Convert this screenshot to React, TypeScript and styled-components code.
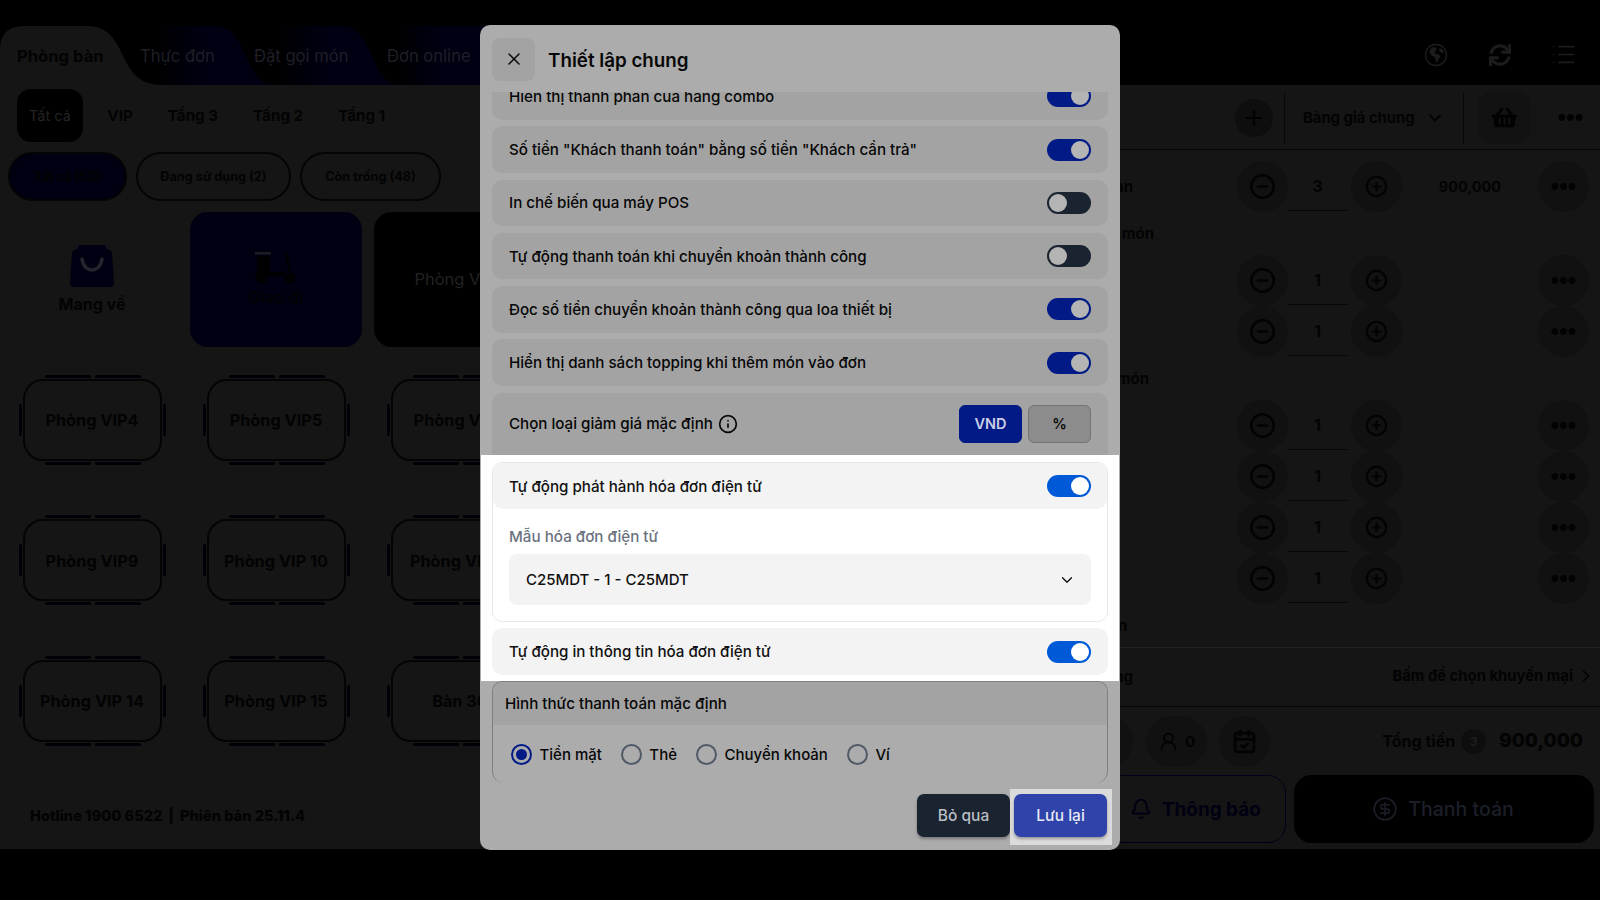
import React from "react";
import styled, { createGlobalStyle } from "styled-components";
import { X, ChevronDown, ChevronRight, Info, Plus, List, CircleMinus, CirclePlus, UserRound, CalendarCheck, Bell, CircleDollarSign } from "lucide-react";
import { FaSync, FaShoppingBasket, FaEllipsisH } from "react-icons/fa";

const Global = createGlobalStyle`
  html, body { margin: 0; padding: 0; background: #000; }
  * { box-sizing: border-box; }
  body { font-family: Inter, "Noto Sans", "Liberation Sans", sans-serif; }
`;

const Page = styled.div`
  position: relative; width: 1600px; height: 900px; background: #000; overflow: hidden;
  display: flex; flex-direction: column; color: #030303;
`;
const TopBar = styled.div`display: flex; height: 85px; padding-top: 26px; flex-shrink: 0;`;
const Tabs = styled.div`display: flex; flex: 1; align-items: stretch;`;
const TabItem = styled.div<{ $w: number; $ml: number; $pl: number; $z: number; $clip: string; $active?: boolean }>`
  position: relative; z-index: ${p => p.$z};
  width: ${p => p.$w}px; margin-left: ${p => p.$ml}px; padding-left: ${p => p.$pl}px;
  display: flex; align-items: center; font-size: 16.6px; white-space: nowrap;
  font-weight: ${p => (p.$active ? 700 : 400)};
  color: ${p => (p.$active ? "#030303" : "#1f1f27")};
  background: ${p => (p.$active ? "#151515" : "linear-gradient(90deg, #000 22%, #000012 55%)")};
  clip-path: path("${p => p.$clip}");
`;
const TopIcons = styled.div`display: flex; padding-right: 5px; align-items: center; padding-bottom: 2px;`;
const TopIcon = styled.div`width: 63.5px; display: flex; justify-content: center; align-items: center; color: #1c1c1c;`;

const Body = styled.div`display: flex; height: 764px; background: #151515;`;
const LeftPanel = styled.div`width: 1040px; display: flex; flex-direction: column; padding-top: 4px;`;
const SubTabs = styled.div`display: flex; padding-left: 17px; height: 53px;`;
const SubTab = styled.div<{ $active?: boolean }>`
  display: flex; align-items: center; padding: 0 ${p => (p.$active ? 12 : 17.5)}px; border-radius: 14px;
  margin-right: ${p => (p.$active ? 7 : 0)}px;
  font-size: ${p => (p.$active ? 14.5 : 15.2)}px; font-weight: ${p => (p.$active ? 400 : 700)};
  background: ${p => (p.$active ? "#000" : "transparent")};
  color: ${p => (p.$active ? "#232323" : "#030303")};
`;
const Filters = styled.div`display: flex; gap: 9px; padding-left: 8px; margin-top: 9.5px;`;
const Filter = styled.div<{ $active?: boolean; $w: number }>`
  width: ${p => p.$w}px; height: 49px; border-radius: 25px; display: flex; align-items: center; justify-content: center;
  font-size: 12.7px; font-weight: 700; border: 2px solid #040404;
  background: ${p => (p.$active ? "#000012" : "transparent")};
  color: #030303;
`;
const Specials = styled.div`display: grid; grid-template-columns: repeat(3, 184px); margin-top: 11px; height: 135px;`;
const Special = styled.div<{ $tone: "plain" | "navy" | "black" }>`
  margin: 0 6px; border-radius: 18px; display: flex; flex-direction: column; align-items: center; justify-content: center;
  background: ${p => (p.$tone === "navy" ? "#000012" : p.$tone === "black" ? "#000" : "transparent")};
`;
const SpecialName = styled.div<{ $big?: boolean; $dim?: boolean }>`
  font-size: ${p => (p.$big ? 16 : 16.5)}px; font-weight: ${p => (p.$big ? 700 : p.$dim ? 400 : 500)}; margin-top: ${p => (p.$big ? 7 : p.$dim ? 0 : 3)}px;
  color: ${p => (p.$dim ? "#222" : "#030303")}; white-space: nowrap;
`;
const Rooms = styled.div`display: grid; grid-template-columns: repeat(3, 184px); grid-auto-rows: 140.5px; margin-top: 3px;`;
const RoomCell = styled.div`display: flex; align-items: center; justify-content: center;`;
const Room = styled.div`
  position: relative; width: 139px; height: 82px; border: 2px solid #040404; border-radius: 20px;
  display: flex; align-items: center; justify-content: center; font-size: 16.3px; font-weight: 700; white-space: nowrap; padding-top: 1px;
`;
const ChairH = styled.i<{ $x: number; $bottom?: boolean }>`
  position: absolute; left: ${p => p.$x}px; width: 46px; height: 3px; background: #000009; border-radius: 2px;
  ${p => (p.$bottom ? "bottom: -6px;" : "top: -6px;")}
`;
const ChairV = styled.i<{ $right?: boolean }>`
  position: absolute; top: 23px; width: 3px; height: 32px; background: #000009; border-radius: 2px;
  ${p => (p.$right ? "right: -6px;" : "left: -6px;")}
`;
const Hotline = styled.div`
  margin-top: auto; margin-bottom: 24px; padding-left: 30px; font-size: 14.6px; font-weight: 800; display: flex; gap: 6px; white-space: nowrap;
`;

const RightPanel = styled.div`width: 560px; display: flex; flex-direction: column;`;
const Toolbar = styled.div`
  height: 65px; display: flex; align-items: center; padding: 1px 0 0 195px; border-bottom: 1px solid #050505; flex-shrink: 0;
`;
const AddCircle = styled.div`width: 38px; height: 38px; border-radius: 50%; background: #0e0e0e; display: flex; align-items: center; justify-content: center; color: #020202;`;
const VLine = styled.div<{ $ml: number }>`width: 1px; height: 52px; background: #080808; margin-left: ${p => p.$ml}px;`;
const PriceSelect = styled.div`display: flex; align-items: center; margin-left: 18px; font-size: 14.8px; font-weight: 700; white-space: nowrap; width: 160px; gap: 10px;`;
const BasketBtn = styled.div`width: 53px; height: 53px; border-radius: 15px; background: #121212; margin-left: 14px; display: flex; align-items: center; justify-content: center; color: #020202;`;
const ToolDots = styled.div`margin-left: 27px; display: flex; color: #020202;`;
const Lines = styled.div`padding-top: 11px; display: flex; flex-direction: column;`;
const Line = styled.div<{ $h?: number }>`
  display: grid; grid-template-columns: 197px 51px 59px 55px 136px 51px; height: ${p => p.$h ?? 51}px; align-items: center; padding-right: 11px;
`;
const LineName = styled.div<{ $w: number }>`width: ${p => p.$w}px; text-align: right; white-space: nowrap; font-size: 15px; font-weight: 700;`;
const Group = styled.div<{ $w: number; $h: number }>`
  height: ${p => p.$h}px; width: ${p => p.$w}px; display: flex; align-items: center; justify-content: flex-end; white-space: nowrap; font-size: 15px; font-weight: 700;
`;
const RoundBtn = styled.div`width: 51px; height: 51px; border-radius: 50%; background: #111; display: flex; align-items: center; justify-content: center; color: #030303;`;
const PlusBtn = styled(RoundBtn)`margin-left: 4px;`;
const Qty = styled.div`height: 50px; border-bottom: 1px solid #050505; margin-top: -1px; display: flex; align-items: center; justify-content: center; font-size: 15.5px; font-weight: 700; padding-top: 1px;`;
const Price = styled.div`text-align: center; font-size: 14.5px; font-weight: 700;`;
const NoteRow = styled.div`height: 44px; display: flex; align-items: center; border-bottom: 1px solid #222; font-size: 15px; font-weight: 700;`;
const PromoRow = styled.div`
  height: 59px; display: flex; align-items: center; justify-content: space-between; border-bottom: 1px solid #050505; padding: 0 4px 2px 0; flex-shrink: 0;
`;
const PromoHint = styled.div`display: flex; align-items: center; gap: 3px; white-space: nowrap; font-size: 14.85px; font-weight: 700;`;
const SummaryRow = styled.div`height: 68px; display: flex; align-items: center; padding: 0 17px 0 42px; flex-shrink: 0;`;
const Guests = styled.div`width: 61px; height: 51px; border-radius: 26px; background: #111; margin: 0 12px 0 13px; display: flex; align-items: center; justify-content: center; gap: 6px; font-size: 15px; font-weight: 700; color: #030303;`;
const Total = styled.div`margin-left: auto; display: flex; align-items: center; font-weight: 700; font-size: 16px;`;
const CountBadge = styled.div`width: 25px; height: 25px; border-radius: 50%; background: #0e0e0e; margin: 0 13px 0 6px; display: flex; align-items: center; justify-content: center; font-size: 12px; font-weight: 500; color: #222;`;
const Amount = styled.div`font-size: 19px; font-weight: 800; margin-top: -1px;`;
const Actions = styled.div`display: flex; gap: 8px; padding: 0 6px 0 64px;`;
const NotifyBtn = styled.div`
  width: 182px; height: 68px; border: 1px solid #00001a; border-radius: 18px; color: #000012; display: flex; align-items: center; gap: 10px;
  padding-left: 25px; font-size: 18.9px; font-weight: 700; white-space: nowrap;
`;
const PayBtn = styled.div`
  flex: 1; height: 68px; border-radius: 18px; background: #000; color: #1c1f28; display: flex; align-items: center; justify-content: center; gap: 10px;
  font-size: 19.5px; font-weight: 500; white-space: nowrap; padding-right: 2px;
`;

const Modal = styled.div`
  position: absolute; z-index: 10; left: 480px; top: 25px; width: 640px; height: 825px; border-radius: 10px; background: #acacac;
  display: flex; flex-direction: column; overflow: hidden; color: #070707;
`;
const ModalHead = styled.div`height: 67px; display: flex; align-items: center; padding: 0 12px; gap: 13px; flex-shrink: 0; padding-top: 1px;`;
const CloseBtn = styled.div`width: 43px; height: 43px; border-radius: 8px; background: #a3a3a3; display: flex; align-items: center; justify-content: center; color: #0a0a0a;`;
const ModalTitle = styled.div`font-size: 18.8px; font-weight: 600; padding-top: 3px;`;
const ModalBody = styled.div`height: 691px; overflow: hidden; padding: 0 12px; display: flex; flex-direction: column; flex-shrink: 0;`;
const Settings = styled.div`display: flex; flex-direction: column; gap: 6.8px; margin-top: -19px;`;
const SettingRow = styled.div<{ $bright?: boolean }>`
  height: 46.5px; flex-shrink: 0; border-radius: 10px; padding: 0 17px; display: flex; align-items: center; justify-content: space-between;
  font-size: 15.15px; font-weight: 500; white-space: nowrap;
  background: ${p => (p.$bright ? "#f3f3f3" : "#a3a3a3")};
`;
const DiscountRow = styled(SettingRow)`height: 62px; border-radius: 10px 10px 0 0;`;
const InvoiceRow = styled(SettingRow)`padding: 0 16px;`;
const LabelGroup = styled.div`display: flex; align-items: center; gap: 5px;`;
const Toggle = styled.div<{ $on?: boolean; $bright?: boolean }>`
  width: 44px; height: 22px; border-radius: 11px; padding: 2px; flex-shrink: 0; display: flex;
  justify-content: ${p => (p.$on ? "flex-end" : "flex-start")};
  background: ${p => (p.$on ? (p.$bright ? "#0059d6" : "#011a85") : "#1a2430")};
`;
const Knob = styled.div<{ $bright?: boolean }>`width: 18px; height: 18px; border-radius: 50%; background: ${p => (p.$bright ? "#fff" : "#b4b4b4")};`;
const UnitGroup = styled.div`display: flex; gap: 6px;`;
const UnitBtn = styled.div<{ $active?: boolean }>`
  width: 63px; height: 38px; border-radius: 6px; display: flex; align-items: center; justify-content: center; font-size: 14.5px; font-weight: 600;
  background: ${p => (p.$active ? "#011a85" : "#8c8c8c")};
  color: ${p => (p.$active ? "#c8cfe6" : "#0a0a0a")};
  border: 1px solid ${p => (p.$active ? "#011a85" : "#747474")};
`;
const Spotlight = styled.div`
  background: #fff; margin: 0 -11px; padding: 7px 11px 6px; display: flex; flex-direction: column; gap: 6.5px; color: #111; flex-shrink: 0;
`;
const InvoiceCard = styled.div`border: 1px solid #e5e7eb; border-radius: 10px; height: 160px; overflow: hidden; display: flex; flex-direction: column;`;
const InvoiceFields = styled.div`padding: 18px 16px 0; display: flex; flex-direction: column;`;
const FieldLabel = styled.div`font-size: 15.2px; font-weight: 500; color: #6b7280;`;
const SelectBox = styled.div`
  margin-top: 8px; height: 51px; border-radius: 8px; background: #f3f3f3; display: flex; align-items: center; justify-content: space-between;
  padding: 0 15px 0 17px; font-size: 15px; font-weight: 500; color: #111;
`;
const PaySection = styled.div`border: 1px solid #7f7f7f; border-bottom: 0; border-radius: 10px 10px 12px 12px; height: 102px; overflow: hidden; flex-shrink: 0;`;
const PayHead = styled.div`height: 43px; background: #a3a3a3; padding-left: 12px; display: flex; align-items: center; font-size: 15.15px; font-weight: 500;`;
const Radios = styled.div`display: flex; align-items: center; height: 60px; padding: 0 0 0 18px; gap: 19px;`;
const RadioItem = styled.div`display: flex; align-items: center; gap: 7.5px; font-size: 15px; font-weight: 500; white-space: nowrap;`;
const RadioDot = styled.div<{ $on?: boolean }>`
  width: 21px; height: 21px; border-radius: 50%; display: flex; align-items: center; justify-content: center;
  border: 2px solid ${p => (p.$on ? "#011a85" : "#4f5a66")};
  &::after { content: ""; width: 11px; height: 11px; border-radius: 50%; background: ${p => (p.$on ? "#011a85" : "transparent")}; }
`;
const ModalFoot = styled.div`flex: 1; display: flex; justify-content: flex-end; align-items: flex-start; padding: 6px 8px 0 0;`;
const CancelBtn = styled.div`
  width: 93px; height: 43px; margin-top: 5px; border-radius: 7px; background: #1a2330; color: #b9bec4; display: flex; align-items: center; justify-content: center;
  font-size: 15.5px; font-weight: 500; box-shadow: 0 2px 3px rgba(0,0,0,.3);
`;
const SaveSpot = styled.div`padding: 5px 5px 8px 4px; background: #dbdbdb;`;
const SaveBtn = styled.div`
  width: 93px; height: 43px; border-radius: 7px; background: #2f43ab; color: #e6e8f5; display: flex; align-items: center; justify-content: center;
  font-size: 15.5px; font-weight: 500; box-shadow: 0 2px 3px rgba(0,0,0,.3);
`;

const Globe = () => (
  <svg width="24" height="24" viewBox="0 0 24 24" fill="none">
    <circle cx="12" cy="12" r="10.5" stroke="currentColor" strokeWidth="1.4" />
    <path fill="currentColor" d="M6 6.5l3-2.5 3 .5 1 2-2 1.5-.5 2 2.5 1 2.5 1 1 1.5-2 3-2 3.5-1-3-.5-3-3-1-2.5-3.5zM15.5 5l3 1.5 2 3-3 .5-2.5-2.5z" />
  </svg>
);
const Bag = () => (
  <svg width="44" height="42" viewBox="0 0 44 42">
    <path fill="#000012" d="M9 0h26l2 4c3 1 5 2 5 5l2 29c0 2-1 4-4 4H4c-3 0-4-2-4-4L2 9c0-3 2-4 5-5z" />
    <path fill="none" stroke="#20262c" strokeWidth="3.5" strokeLinecap="round" d="M12 14c1 8 6 11 10 11s9-3 10-11" />
  </svg>
);
const Scooter = () => (
  <svg width="42" height="32" viewBox="0 0 42 32">
    <rect x="0" y="0" width="16" height="2.5" fill="#1c1c22" />
    <path fill="#000" d="M2 4h12l1 16 2 4H0l2-4z" />
    <path fill="#000" d="M30 2h3l3 16-2 1zM15 20h15v4H15z" />
    <circle cx="7" cy="26" r="5.5" fill="#000" />
    <circle cx="35" cy="26" r="5.5" fill="#000" />
  </svg>
);

const Chairs = () => (
  <>
    <ChairH $x={20} /><ChairH $x={70} />
    <ChairH $x={20} $bottom /><ChairH $x={70} $bottom />
    <ChairV /><ChairV $right />
  </>
);

const rooms = ["Phòng VIP4", "Phòng VIP5", "Phòng VIP6", "Phòng VIP9", "Phòng VIP 10", "Phòng VIP 11", "Phòng VIP 14", "Phòng VIP 15", "Bàn 30"];

const settings: { label: string; on: boolean }[] = [
  { label: "Hiển thị thành phần của hàng combo", on: true },
  { label: 'Số tiền "Khách thanh toán" bằng số tiền "Khách cần trả"', on: true },
  { label: "In chế biến qua máy POS", on: false },
  { label: "Tự động thanh toán khi chuyển khoản thành công", on: false },
  { label: "Đọc số tiền chuyển khoản thành công qua loa thiết bị", on: true },
  { label: "Hiển thị danh sách topping khi thêm món vào đơn", on: true },
];

const OrderLine = ({ qty }: { qty: number }) => (
  <Line>
    <span />
    <RoundBtn><CircleMinus size={27} strokeWidth={2.3} /></RoundBtn>
    <Qty>{qty}</Qty>
    <PlusBtn><CirclePlus size={23} strokeWidth={2.3} /></PlusBtn>
    <Price />
    <RoundBtn><FaEllipsisH size={25} /></RoundBtn>
  </Line>
);

const Switch = ({ on, bright }: { on: boolean; bright?: boolean }) => (
  <Toggle $on={on} $bright={bright}><Knob $bright={bright} /></Toggle>
);

export default function App() {
  return (
    <Page>
      <Global />
      <TopBar>
        <Tabs>
          <TabItem $w={160} $ml={0} $pl={17} $z={4} $active $clip="M0 59 V24 Q0 0 24 0 H88 C108 0 116 14 124 32 C132 50 144 59 160 59 Z">Phòng bàn</TabItem>
          <TabItem $w={155} $ml={-40} $pl={20} $z={3} $clip="M0 59 V0 H94 C112 0 118 12 126 30 C134 48 140 59 155 59 Z">Thực đơn</TabItem>
          <TabItem $w={160} $ml={-35} $pl={14} $z={2} $clip="M0 59 V0 H100 C118 0 124 12 132 30 C140 48 146 59 160 59 Z">Đặt gọi món</TabItem>
          <TabItem $w={135} $ml={-35} $pl={22} $z={1} $clip="M0 59 V0 H135 V59 Z">Đơn online</TabItem>
        </Tabs>
        <TopIcons>
          <TopIcon><Globe /></TopIcon>
          <TopIcon><FaSync size={22} /></TopIcon>
          <TopIcon><List size={27} strokeWidth={1.4} /></TopIcon>
        </TopIcons>
      </TopBar>
      <Body>
        <LeftPanel>
          <SubTabs>
            <SubTab $active>Tất cả</SubTab>
            <SubTab>VIP</SubTab>
            <SubTab>Tầng 3</SubTab>
            <SubTab>Tầng 2</SubTab>
            <SubTab>Tầng 1</SubTab>
          </SubTabs>
          <Filters>
            <Filter $w={119} $active>Tất cả (50)</Filter>
            <Filter $w={155}>Đang sử dụng (2)</Filter>
            <Filter $w={141}>Còn trống (48)</Filter>
          </Filters>
          <Specials>
            <Special $tone="plain"><Bag /><SpecialName $big>Mang về</SpecialName></Special>
            <Special $tone="navy"><Scooter /><SpecialName>Giao đi</SpecialName></Special>
            <Special $tone="black"><SpecialName $dim>Phòng VIP3</SpecialName></Special>
          </Specials>
          <Rooms>
            {rooms.map(r => (
              <RoomCell key={r}><Room><Chairs />{r}</Room></RoomCell>
            ))}
          </Rooms>
          <Hotline><span>Hotline 1900 6522</span><span>|</span><span>Phiên bản 25.11.4</span></Hotline>
        </LeftPanel>
        <RightPanel>
          <Toolbar>
            <AddCircle><Plus size={24} strokeWidth={2.2} /></AddCircle>
            <VLine $ml={11} />
            <PriceSelect>Bảng giá chung <ChevronDown size={20} strokeWidth={2.4} /></PriceSelect>
            <VLine $ml={0} />
            <BasketBtn><FaShoppingBasket size={25} /></BasketBtn>
            <ToolDots><FaEllipsisH size={25} /></ToolDots>
          </Toolbar>
          <Lines>
            <Line>
              <LineName $w={93}>Thời gian</LineName>
              <RoundBtn><CircleMinus size={27} strokeWidth={2.3} /></RoundBtn>
              <Qty>3</Qty>
              <PlusBtn><CirclePlus size={23} strokeWidth={2.3} /></PlusBtn>
              <Price>900,000</Price>
              <RoundBtn><FaEllipsisH size={25} /></RoundBtn>
            </Line>
            <Group $w={114} $h={43}>Nhóm món</Group>
            <OrderLine qty={1} />
            <OrderLine qty={1} />
            <Group $w={109} $h={43}>Nhóm món</Group>
            <OrderLine qty={1} />
            <OrderLine qty={1} />
            <OrderLine qty={1} />
            <OrderLine qty={1} />
            <NoteRow><LineName $w={84}>Ghi chú đơn</LineName></NoteRow>
          </Lines>
          <PromoRow>
            <LineName $w={93}>Tổng cộng</LineName>
            <PromoHint>Bấm để chọn khuyến mại <ChevronRight size={20} strokeWidth={1.8} /></PromoHint>
          </PromoRow>
          <SummaryRow>
            <RoundBtn />
            <Guests><UserRound size={21} strokeWidth={2.2} />0</Guests>
            <RoundBtn><CalendarCheck size={25} strokeWidth={2.6} /></RoundBtn>
            <Total>Tổng tiền<CountBadge>3</CountBadge><Amount>900,000</Amount></Total>
          </SummaryRow>
          <Actions>
            <NotifyBtn><Bell size={22} strokeWidth={2.2} />Thông báo</NotifyBtn>
            <PayBtn><CircleDollarSign size={26} strokeWidth={1.4} />Thanh toán</PayBtn>
          </Actions>
        </RightPanel>
      </Body>
      <Modal>
        <ModalHead>
          <CloseBtn><X size={20} strokeWidth={1.8} /></CloseBtn>
          <ModalTitle>Thiết lập chung</ModalTitle>
        </ModalHead>
        <ModalBody>
          <Settings>
            {settings.map(s => (
              <SettingRow key={s.label}>{s.label}<Switch on={s.on} /></SettingRow>
            ))}
            <DiscountRow>
              <LabelGroup>Chọn loại giảm giá mặc định <Info size={20} strokeWidth={2} /></LabelGroup>
              <UnitGroup><UnitBtn $active>VND</UnitBtn><UnitBtn>%</UnitBtn></UnitGroup>
            </DiscountRow>
          </Settings>
          <Spotlight>
            <InvoiceCard>
              <InvoiceRow $bright>Tự động phát hành hóa đơn điện tử<Switch on bright /></InvoiceRow>
              <InvoiceFields>
                <FieldLabel>Mẫu hóa đơn điện tử</FieldLabel>
                <SelectBox>C25MDT - 1 - C25MDT <ChevronDown size={18} strokeWidth={1.8} /></SelectBox>
              </InvoiceFields>
            </InvoiceCard>
            <SettingRow $bright>Tự động in thông tin hóa đơn điện tử<Switch on bright /></SettingRow>
          </Spotlight>
          <PaySection>
            <PayHead>Hình thức thanh toán mặc định</PayHead>
            <Radios>
              <RadioItem><RadioDot $on />Tiền mặt</RadioItem>
              <RadioItem><RadioDot />Thẻ</RadioItem>
              <RadioItem><RadioDot />Chuyển khoản</RadioItem>
              <RadioItem><RadioDot />Ví</RadioItem>
            </Radios>
          </PaySection>
        </ModalBody>
        <ModalFoot>
          <CancelBtn>Bỏ qua</CancelBtn>
          <SaveSpot><SaveBtn>Lưu lại</SaveBtn></SaveSpot>
        </ModalFoot>
      </Modal>
    </Page>
  );
}
